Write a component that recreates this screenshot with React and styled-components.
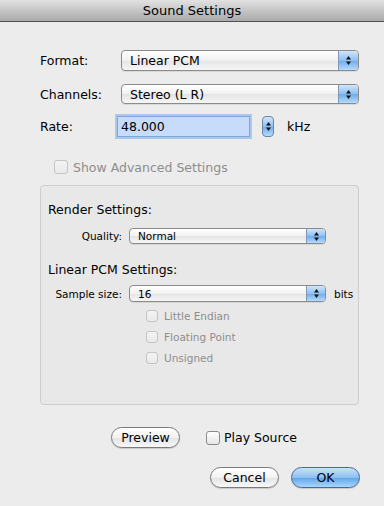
import React from "react";
import styled, { createGlobalStyle } from "styled-components";

const Global = createGlobalStyle`
  html, body { margin: 0; padding: 0; background: #ececec; }
  * { box-sizing: border-box; }
`;

const Window = styled.div`
  width: 384px;
  height: 506px;
  background: #ececec;
  font-family: "Lucida Grande", "DejaVu Sans", sans-serif;
  font-size: 12.5px;
  color: #000;
  overflow: hidden;
`;

const TitleBar = styled.div`
  height: 22px;
  display: flex;
  align-items: center;
  justify-content: center;
  background: linear-gradient(#e2e2e2, #a9a9a9);
  border-bottom: 1px solid #515151;
  font-size: 13px;
`;

const Body = styled.div`
  padding: 28px 24px 0 40px;
`;

const Row = styled.div`
  display: flex;
  align-items: center;
  height: ${(p) => p.h || 21}px;
  margin-bottom: ${(p) => p.mb || 0}px;
  padding-left: ${(p) => p.pl || 0}px;
`;

const Label = styled.div`
  width: ${(p) => p.w}px;
  flex-shrink: 0;
  text-align: ${(p) => (p.right ? "right" : "left")};
  padding-right: ${(p) => (p.right ? 7 : 0)}px;
  font-size: ${(p) => (p.small ? 10.5 : 12.5)}px;
`;

const Popup = styled.div`
  position: relative;
  display: flex;
  align-items: center;
  width: ${(p) => p.w}px;
  height: ${(p) => p.h}px;
  border: 1px solid #8b8b8b;
  border-radius: 4px;
  background: linear-gradient(#ffffff, #f1f1f1 50%, #e4e4e4 51%, #f6f6f6);
  box-shadow: 0 1px 0 rgba(0, 0, 0, 0.08);
  padding-left: 8px;
  font-size: ${(p) => (p.small ? 10.5 : 12.5)}px;
  overflow: hidden;
`;

const Cap = styled.div`
  position: absolute;
  right: 0;
  top: 0;
  bottom: 0;
  width: ${(p) => p.w || 19}px;
  display: flex;
  align-items: center;
  justify-content: center;
  border-left: 1px solid #7f98b8;
  background: linear-gradient(#d0e5fb, #8fbff1 50%, #6eabeb 51%, #b6dafb);
`;

const Arrows = () => (
  <svg width="7" height="11" viewBox="0 0 7 11">
    <polygon points="3.5,1 6,4.5 1,4.5" fill="#111" />
    <polygon points="3.5,10 6,6.5 1,6.5" fill="#111" />
  </svg>
);

const Field = styled.div`
  width: 133px;
  height: 21px;
  border: 1px solid #7ea6d6;
  box-shadow: 0 0 0 2px #a9c8ec;
  background: #c7dcfa;
  display: flex;
  align-items: center;
  padding-left: 3px;
  font-size: 12.5px;
`;

const Stepper = styled.div`
  width: 12px;
  height: 21px;
  margin-left: 12px;
  border: 1px solid #6a86aa;
  border-radius: 4px;
  display: flex;
  align-items: center;
  justify-content: center;
  background: linear-gradient(#d0e5fb, #8fbff1 50%, #6eabeb 51%, #b6dafb);
`;

const Unit = styled.span`
  margin-left: ${(p) => p.ml}px;
  font-size: ${(p) => (p.small ? 10.5 : 12.5)}px;
`;

const Box = styled.span`
  width: ${(p) => (p.small ? 12 : 14)}px;
  height: ${(p) => (p.small ? 12 : 14)}px;
  flex-shrink: 0;
  border: 1px solid ${(p) => (p.disabled ? "#c4c4c4" : "#8a8a8a")};
  border-radius: 3px;
  background: ${(p) =>
    p.disabled ? "linear-gradient(#f4f4f4, #e9e9e9)" : "linear-gradient(#ffffff, #e6e6e6)"};
  margin-right: ${(p) => p.mr}px;
`;

const CheckText = styled.span`
  color: ${(p) => (p.disabled ? "#8e8e8e" : "#000")};
  font-size: ${(p) => (p.small ? 10.5 : 12.5)}px;
`;

const Group = styled.div`
  width: 319px;
  height: 220px;
  margin-top: 11px;
  border: 1px solid #cdcdcd;
  border-radius: 4px;
  background: #e8e8e8;
  padding: 16px 0 0 7px;
`;

const Heading = styled.div`
  font-size: 12.5px;
  height: 16px;
  line-height: 16px;
  margin-bottom: ${(p) => p.mb}px;
`;

const Button = styled.div`
  width: 69px;
  height: 21px;
  border-radius: 11px;
  border: 1px solid ${(p) => (p.primary ? "#47689a" : "#7a7a7a")};
  background: ${(p) =>
    p.primary
      ? "linear-gradient(#c9e3fb, #8cc0f1 50%, #5ea4ea 51%, #a9d6fb)"
      : "linear-gradient(#ffffff, #f2f2f2 50%, #e3e3e3 51%, #f8f8f8)"};
  display: flex;
  align-items: center;
  justify-content: center;
  font-size: 12.5px;
  box-shadow: 0 1px 1px rgba(0, 0, 0, 0.15);
`;

const Footer = styled.div`
  display: flex;
  align-items: center;
  height: 21px;
  margin-top: ${(p) => p.mt}px;
  padding-left: ${(p) => p.pl || 0}px;
  justify-content: ${(p) => (p.end ? "flex-end" : "flex-start")};
  gap: ${(p) => p.gap || 0}px;
`;

export default function App() {
  return (
    <Window>
      <Global />
      <TitleBar>Sound Settings</TitleBar>
      <Body>
        <Row mb={13}>
          <Label w={81}>Format:</Label>
          <Popup w={238} h={21}>
            Linear PCM
            <Cap w={20}>
              <Arrows />
            </Cap>
          </Popup>
        </Row>
        <Row mb={12} h={20}>
          <Label w={81}>Channels:</Label>
          <Popup w={238} h={20}>
            Stereo (L R)
            <Cap w={20}>
              <Arrows />
            </Cap>
          </Popup>
        </Row>
        <Row h={21}>
          <Label w={77}>Rate:</Label>
          <Field>48.000</Field>
          <Stepper>
            <Arrows />
          </Stepper>
          <Unit ml={13}>kHz</Unit>
        </Row>
        <Row h={14} pl={14} style={{ marginTop: 23 }}>
          <Box disabled mr={5} />
          <CheckText disabled>Show Advanced Settings</CheckText>
        </Row>
        <Group>
          <Heading mb={10}>Render Settings:</Heading>
          <Row h={16} mb={18}>
            <Label w={81} right small>
              Quality:
            </Label>
            <Popup w={197} h={16} small>
              Normal
              <Cap w={19}>
                <Arrows />
              </Cap>
            </Popup>
          </Row>
          <Heading mb={7}>Linear PCM Settings:</Heading>
          <Row h={17} mb={7}>
            <Label w={81} right small>
              Sample size:
            </Label>
            <Popup w={197} h={17} small>
              16
              <Cap w={19}>
                <Arrows />
              </Cap>
            </Popup>
            <Unit ml={8} small>
              bits
            </Unit>
          </Row>
          <Row h={14} mb={7} pl={98}>
            <Box small disabled mr={6} />
            <CheckText small disabled>Little Endian</CheckText>
          </Row>
          <Row h={14} mb={7} pl={98}>
            <Box small disabled mr={6} />
            <CheckText small disabled>Floating Point</CheckText>
          </Row>
          <Row h={14} pl={98}>
            <Box small disabled mr={6} />
            <CheckText small disabled>Unsigned</CheckText>
          </Row>
        </Group>
        <Footer mt={22} pl={71}>
          <Button>Preview</Button>
          <Box mr={4} style={{ marginLeft: 26 }} />
          <CheckText>Play Source</CheckText>
        </Footer>
        <Footer mt={19} end gap={12}>
          <Button>Cancel</Button>
          <Button primary>OK</Button>
        </Footer>
      </Body>
    </Window>
  );
}
